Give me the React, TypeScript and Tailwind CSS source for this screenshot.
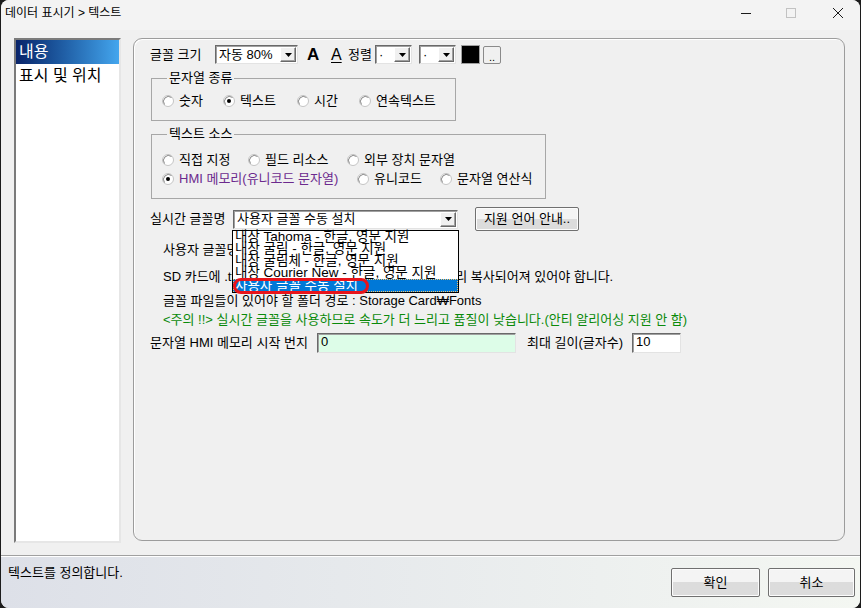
import React from "react";

function Arrow() {
  return (
    <div className="w-[16px] h-[15px] bg-[#f0f0f0] border border-t-white border-l-white border-r-[#696969] border-b-[#696969] shadow-[inset_-1px_-1px_0_#a0a0a0] flex items-center justify-center">
      <svg width="7" height="4" viewBox="0 0 7 4">
        <path d="M0 0 H7 L3.5 4 Z" fill="#000" />
      </svg>
    </div>
  );
}

function Select({ value, width }: { value: string; width: string }) {
  return (
    <div
      className={`${width} h-[19px] shrink-0 bg-white border border-t-[#696969] border-l-[#696969] border-r-[#e3e3e3] border-b-[#e3e3e3] shadow-[inset_1px_1px_0_#a0a0a0] flex items-center justify-between pl-[3px] pr-px`}
    >
      <span className="leading-[14px] whitespace-nowrap">{value}</span>
      <Arrow />
    </div>
  );
}

function Radio({ label, checked, width, className }: { label: string; checked?: boolean; width: string; className?: string }) {
  return (
    <div className={`${width} flex items-center h-[14px] shrink-0`}>
      <svg width="12" height="12" viewBox="0 0 12 12" className="shrink-0">
        <circle cx="6" cy="6" r="5.5" fill="#fff" stroke="#c4c4c4" />
        <path d="M2.5 9.5 A5 5 0 0 1 9.5 2.5" stroke="#8a8a8a" fill="none" />
        {checked && <circle cx="6" cy="6" r="2" fill="#000" />}
      </svg>
      <span className={`ml-[5px] leading-[14px] whitespace-nowrap ${className ?? ""}`}>{label}</span>
    </div>
  );
}

function Button({ children, className }: { children: React.ReactNode; className: string }) {
  return (
    <div
      className={`${className} shrink-0 border border-[#707070] rounded-[2px] bg-gradient-to-b from-[#f4f4f4] from-50% to-[#dcdcdc] to-50% shadow-[inset_0_0_0_1px_#fcfcfc] flex items-center justify-center leading-[14px]`}
    >
      {children}
    </div>
  );
}

export default function App() {
  return (
    <div className="w-[861px] h-[608px] bg-[#1c1c1c] font-['Liberation_Sans','Noto_Sans_CJK_KR',sans-serif] text-[13px] text-black">
      <div className="ml-px w-[859px] h-[608px] rounded-[8px] overflow-hidden bg-[#f0f0f0] flex flex-col">
        {/* title bar */}
        <div className="h-[30px] bg-[#f3f3f3] flex items-center shrink-0">
          <span className="ml-[4px] text-[12px] leading-[14px] -mt-[4px]">데이터 표시기 &gt; 텍스트</span>
          <div className="ml-auto flex items-center -mt-[4px]">
            <svg width="10" height="10" viewBox="0 0 10 10" className="mr-[35px]">
              <path d="M0 5.5 H10" stroke="#1a1a1a" strokeWidth="1" />
            </svg>
            <svg width="10" height="10" viewBox="0 0 10 10" className="mr-[37px]">
              <rect x="0.5" y="0.5" width="9" height="9" fill="none" stroke="#c2c2c2" />
            </svg>
            <svg width="10" height="10" viewBox="0 0 10 10" className="mr-[17px]">
              <path d="M0 0 L10 10 M10 0 L0 10" stroke="#1a1a1a" strokeWidth="1" />
            </svg>
          </div>
        </div>

        {/* body */}
        <div className="h-[525px] flex pl-[13px] pt-[8px] gap-[12px] shrink-0">
          <div className="w-[107px] h-[505px] bg-white border-2 border-t-[#7a7a7a] border-l-[#7a7a7a] border-r-[#e6e6e6] border-b-[#e6e6e6]">
            <div className="h-[24px] bg-gradient-to-r from-[#0a246a] to-[#44a6ee] text-white text-[16px] leading-[24px] pl-[3px]">내용</div>
            <div className="h-[24px] text-[16px] leading-[24px] pl-[3px]">표시 및 위치</div>
          </div>

          <div className="relative w-[712px] h-[503px] border border-[#9c9c9c] rounded-[9px] shadow-[inset_1px_1px_0_#ffffff] pl-[16px] pt-[6px] flex flex-col">
            {/* row 1 */}
            <div className="flex items-center h-[19px]">
              <span className="w-[65px] leading-[14px]">글꼴 크기</span>
              <Select value="자동 80%" width="w-[83px]" />
              <span className="w-[32px] pl-[9px] font-bold text-[17px] leading-[18px]">A</span>
              <span className="w-[18px] pl-[1px] text-[16px] leading-[17px] underline underline-offset-2">A</span>
              <span className="w-[27px] leading-[14px]">정렬</span>
              <Select value="·" width="w-[37px]" />
              <div className="w-[7px]" />
              <Select value="·" width="w-[37px]" />
              <div className="ml-[5px] w-[19px] h-[19px] bg-black border border-[#a0a0a0]" />
              <div className="ml-[3px] w-[18px] h-[18px] bg-[#f0f0f0] border border-[#8a8a8a] rounded-[2px] flex items-end justify-center text-[11px] leading-[12px]">..</div>
            </div>

            {/* 문자열 종류 */}
            <fieldset className="mt-[7px] ml-px w-[305px] border border-[#a7a7a7] pl-[10px] pt-[9px] pb-[12px]">
              <legend className="ml-[5px] px-[2px] leading-[14px]">문자열 종류</legend>
              <div className="flex">
                <Radio label="숫자" width="w-[61px]" />
                <Radio label="텍스트" width="w-[74px]" checked />
                <Radio label="시간" width="w-[62px]" />
                <Radio label="연속텍스트" width="w-[90px]" />
              </div>
            </fieldset>

            {/* 텍스트 소스 */}
            <fieldset className="mt-[6px] ml-px w-[395px] border border-[#a7a7a7] pl-[10px] pt-[12px] pb-[12px]">
              <legend className="ml-[5px] px-[2px] leading-[14px]">텍스트 소스</legend>
              <div className="flex">
                <Radio label="직접 지정" width="w-[86px]" />
                <Radio label="필드 리소스" width="w-[99px]" />
                <Radio label="외부 장치 문자열" width="w-[130px]" />
              </div>
              <div className="flex mt-[5px]">
                <Radio label="HMI 메모리(유니코드 문자열)" width="w-[195px]" checked className="text-[#6c2a8e]" />
                <Radio label="유니코드" width="w-[83px]" />
                <Radio label="문자열 연산식" width="w-[100px]" />
              </div>
            </fieldset>

            {/* 실시간 글꼴명 */}
            <div className="flex items-center h-[24px] mt-[8px]">
              <span className="w-[83px] leading-[14px]">실시간 글꼴명</span>
              <Select value="사용자 글꼴 수동 설치" width="w-[225px]" />
              <Button className="ml-[17px] w-[104px] h-[24px]">지원 언어 안내..</Button>
            </div>

            <div className="mt-[12px] ml-[13px] leading-[14px]">사용자 글꼴명</div>
            <div className="mt-[13px] ml-[13px] leading-[14px] whitespace-nowrap">SD 카드에 .ttf 형식의 글꼴 파일을 해당 폴더에 모두 미리 복사되어져 있어야 합니다.</div>
            <div className="mt-[10px] ml-[13px] leading-[14px] whitespace-nowrap">글꼴 파일들이 있어야 할 폴더 경로 : Storage Card₩Fonts</div>
            <div className="mt-[5px] ml-[13px] leading-[14px] whitespace-nowrap text-[#0a8a0a]">&lt;주의 !!&gt; 실시간 글꼴을 사용하므로 속도가 더 느리고 품질이 낮습니다.(안티 알리어싱 지원 안 함)</div>

            <div className="flex items-center h-[20px] mt-[6px]">
              <span className="w-[167px] leading-[14px]">문자열 HMI 메모리 시작 번지</span>
              <div className="w-[199px] h-[20px] bg-[#ddfde8] border border-t-[#696969] border-l-[#696969] border-r-[#e3e3e3] border-b-[#e3e3e3] shadow-[inset_1px_1px_0_#a0a0a0] pl-[3px] leading-[15px]">0</div>
              <span className="ml-[11px] w-[105px] leading-[14px]">최대 길이(글자수)</span>
              <div className="w-[49px] h-[20px] bg-white border border-t-[#696969] border-l-[#696969] border-r-[#e3e3e3] border-b-[#e3e3e3] shadow-[inset_1px_1px_0_#a0a0a0] pl-[3px] leading-[15px]">10</div>
            </div>

            {/* open dropdown list */}
            <div className="absolute left-[98px] top-[191px] w-[227px] h-[63px] bg-white border border-black text-[13.5px]">
              <div className="h-[12px] leading-[12px] pl-[2px] whitespace-nowrap">내장 Tahoma - 한글, 영문 지원</div>
              <div className="h-[12px] leading-[12px] pl-[2px] whitespace-nowrap">내장 굴림 - 한글, 영문 지원</div>
              <div className="h-[12px] leading-[12px] pl-[2px] whitespace-nowrap">내장 굴림체 - 한글, 영문 지원</div>
              <div className="h-[12px] leading-[12px] pl-[2px] whitespace-nowrap">내장 Courier New - 한글, 영문 지원</div>
              <div className="h-[13px] leading-[12px] pl-[1px] bg-[#0078d7] text-white border border-dotted border-[#f5c36a] whitespace-nowrap">사용자 글꼴 수동 설치</div>
            </div>
            <div className="absolute left-[99px] top-[239px] w-[136px] h-[16px] border-[3px] border-[#e8141b] rounded-[8px]" />
          </div>
        </div>

        {/* status bar */}
        <div className="h-px bg-[#a0a0a0] shrink-0" />
        <div className="flex-1 bg-gradient-to-r from-[#dde0e8] to-[#f4f7f2] border-t border-white flex items-start pl-[7px] pr-[5px]">
          <span className="mt-[9px] leading-[14px]">텍스트를 정의합니다.</span>
          <Button className="ml-auto mt-[11px] w-[89px] h-[29px]">확인</Button>
          <Button className="ml-[8px] mt-[11px] w-[87px] h-[29px]">취소</Button>
        </div>
      </div>
    </div>
  );
}
